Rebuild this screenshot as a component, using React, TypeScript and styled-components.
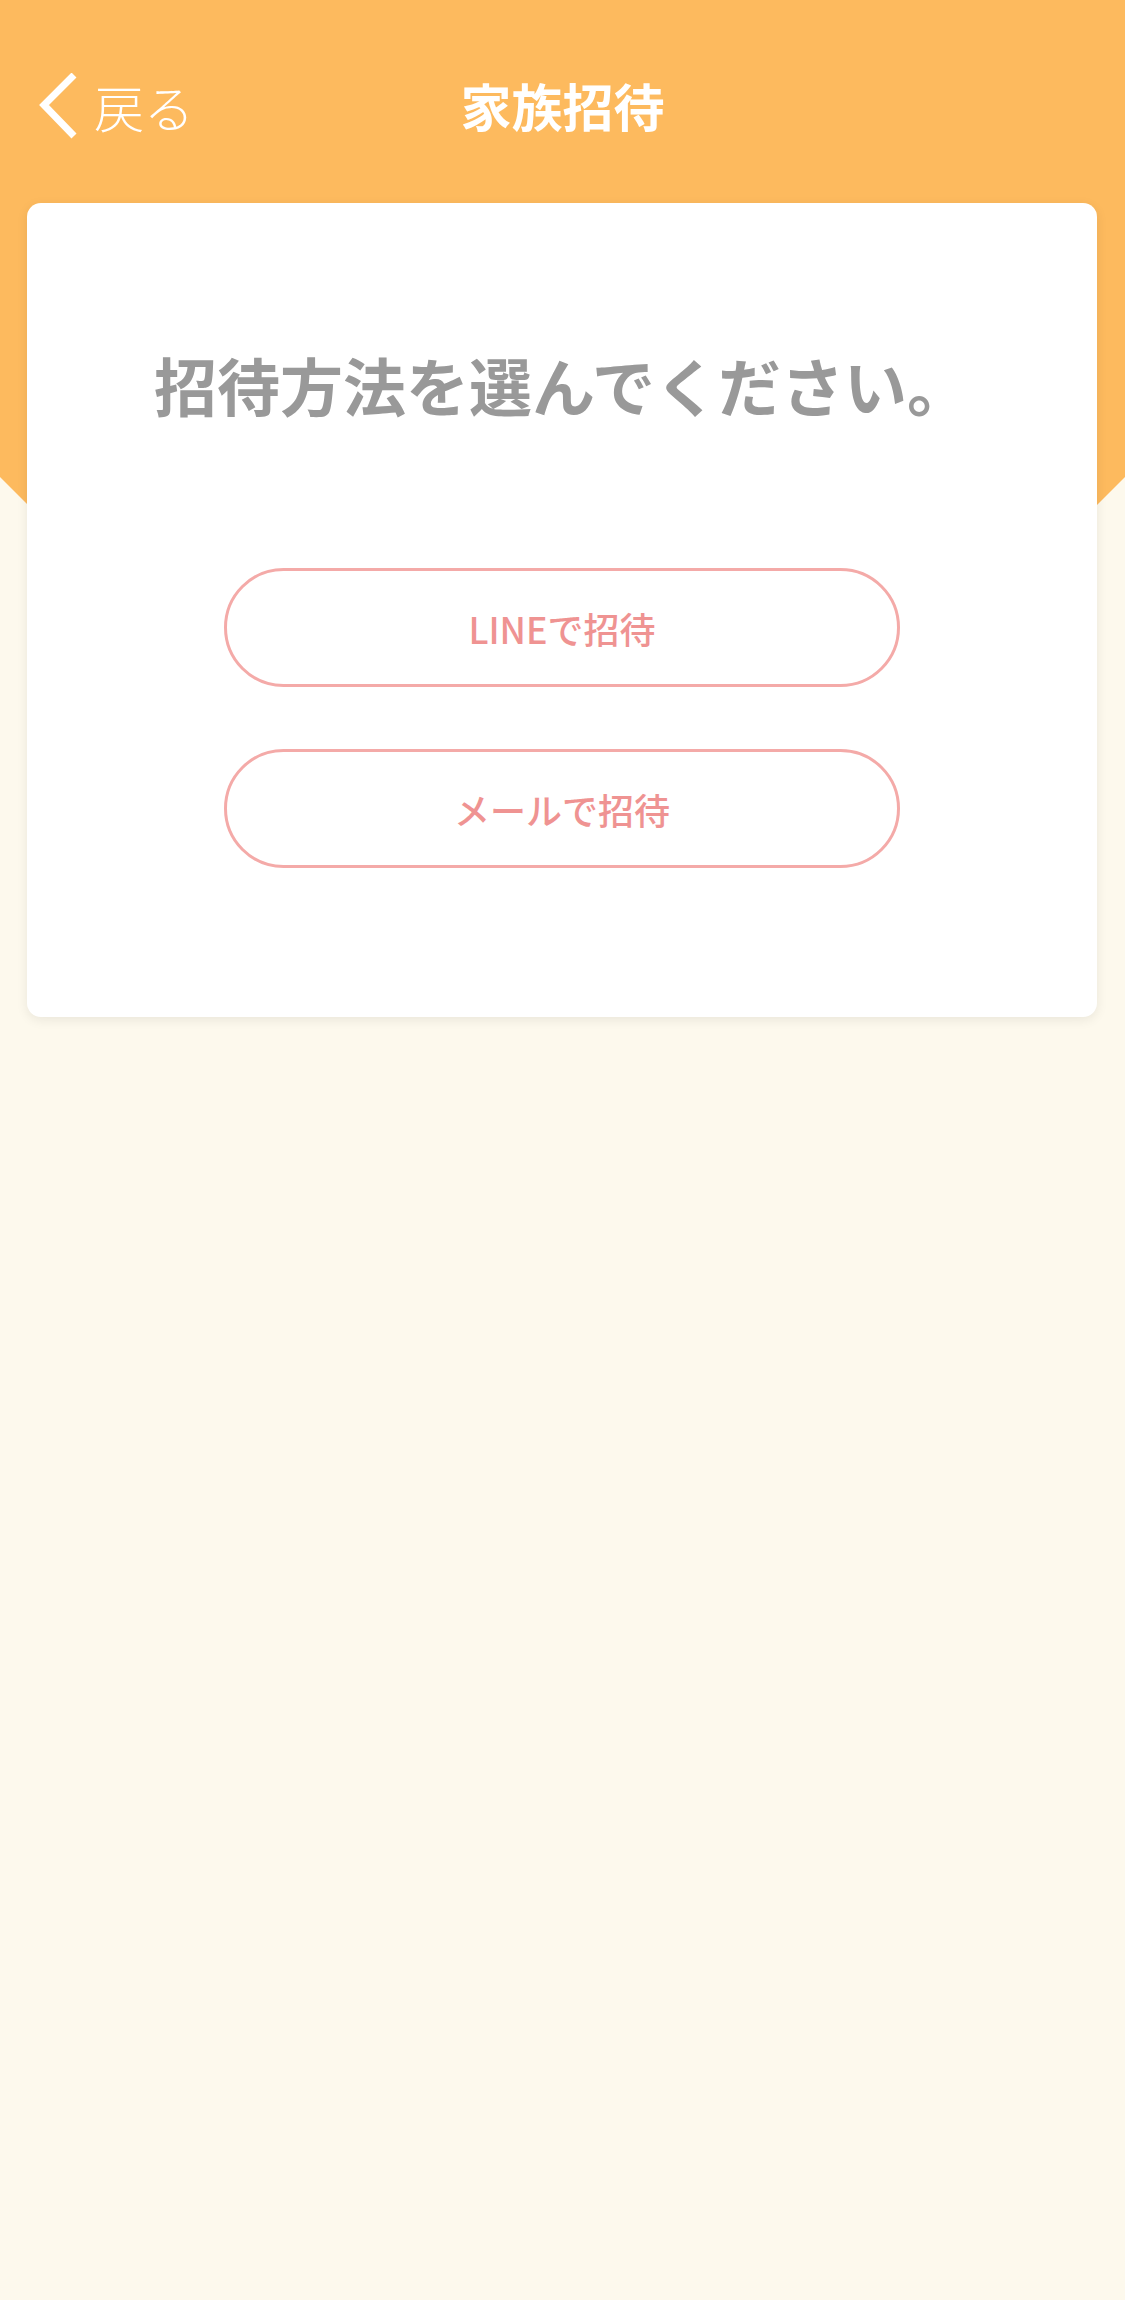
import styled, { createGlobalStyle } from "styled-components";

const GlobalStyle = createGlobalStyle`
  html, body {
    margin: 0;
    padding: 0;
    background: #fdf9ed;
  }
  body {
    font-family: "Noto Sans CJK JP", "Noto Sans", sans-serif;
  }
`;

const BackIcon = () => (
  <svg width="40" height="66" viewBox="0 0 40 66" aria-hidden="true">
    <polyline
      points="35,2 5,32 35,63"
      fill="none"
      stroke="#fff"
      strokeWidth="7"
      strokeLinejoin="miter"
    />
  </svg>
);

const App = () => {
  return (
    <Page>
      <GlobalStyle />
      <Header>
        <BackButton type="button">
          <BackIcon />
          <span>戻る</span>
        </BackButton>
        <Title>家族招待</Title>
        <span />
      </Header>

      <Card>
        <Lead>招待方法を選んでください。</Lead>
        <ButtonList>
          <InviteButton type="button">LINEで招待</InviteButton>
          <InviteButton type="button">メールで招待</InviteButton>
        </ButtonList>
      </Card>
    </Page>
  );
};

export default App;

const Page = styled.div`
  position: relative;
  min-height: 2300px;
  background: #fdf9ed;

  /* オレンジの背景（下端は斜めカット） */
  &::before {
    content: "";
    position: absolute;
    top: 0;
    left: 0;
    right: 0;
    height: 577px;
    background: #fdba5e;
    clip-path: polygon(
      0 0,
      100% 0,
      100% 477px,
      calc(100% - 100px) 577px,
      100px 577px,
      0 477px
    );
  }
`;

const Header = styled.header`
  position: relative;
  height: 203px;
  padding-top: 9px;
  box-sizing: border-box;
  display: grid;
  grid-template-columns: 1fr auto 1fr;
  align-items: center;
`;

const BackButton = styled.button`
  justify-self: start;
  display: flex;
  align-items: center;
  gap: 15px;
  margin-left: 39px;
  padding: 0;
  border: none;
  background: none;
  color: #fff;
  font-family: inherit;
  font-size: 50px;
  font-weight: 300;
  line-height: 1;
`;

const Title = styled.h1`
  margin: 0;
  color: #fff;
  font-size: 51px;
  font-weight: 700;
  line-height: 1.2;
`;

const Card = styled.main`
  position: relative;
  margin: 0 28px 0 27px;
  padding: 144px 0 149px;
  background: #fff;
  border-radius: 14px;
  box-shadow: 0 3px 12px rgba(0, 0, 0, 0.08);
  display: flex;
  flex-direction: column;
  align-items: center;
`;

const Lead = styled.p`
  margin: 0;
  color: #999;
  font-size: 63px;
  font-weight: 700;
  line-height: 74px;
  text-align: center;
`;

const ButtonList = styled.div`
  margin-top: 147px;
  display: flex;
  flex-direction: column;
  gap: 62px;
`;

const InviteButton = styled.button`
  width: 676px;
  height: 119px;
  box-sizing: border-box;
  border: 3px solid #f4aaa8;
  border-radius: 60px;
  background: #fff;
  color: #ef9392;
  font-family: inherit;
  font-size: 36px;
  font-weight: 500;
  cursor: pointer;
`;
